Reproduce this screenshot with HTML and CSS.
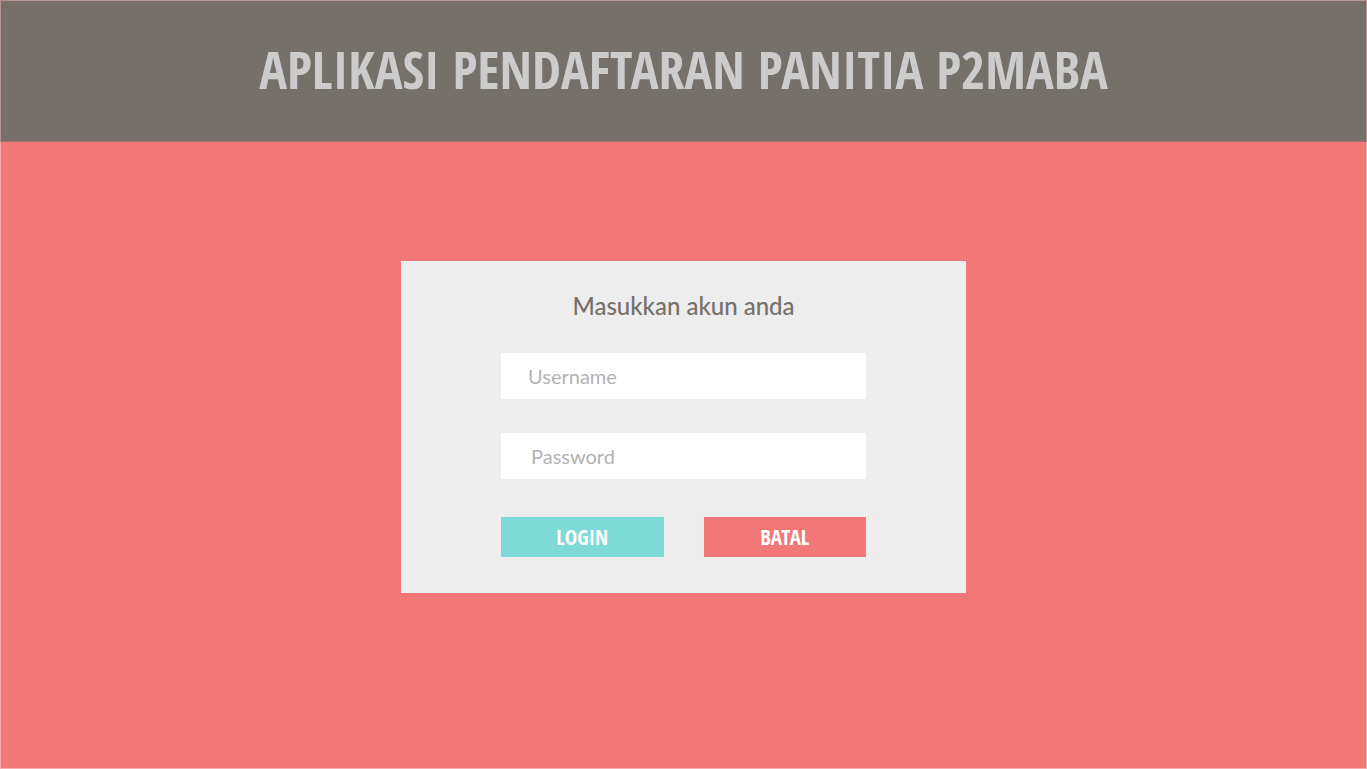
FILE: index.html
```html
<!DOCTYPE html>
<html lang="id">
<head>
<meta charset="utf-8">
<meta name="viewport" content="width=device-width, initial-scale=1">
<title>Aplikasi Pendaftaran Panitia P2MABA</title>
<link rel="stylesheet" href="styles.css">
</head>
<body>
<header class="banner">
  <h1 class="banner-title">APLIKASI PENDAFTARAN PANITIA P2MABA</h1>
</header>
<main class="content">
  <form class="card">
    <h2 class="card-title">Masukkan akun anda</h2>
    <input class="field" type="text" placeholder="Username" aria-label="Username">
    <input class="field field-password" type="password" placeholder="Password" aria-label="Password">
    <div class="actions">
      <button class="button button-login" type="submit">LOGIN</button>
      <button class="button button-cancel" type="reset">BATAL</button>
    </div>
  </form>
</main>
</body>
</html>
```

FILE: styles.css
```css
* {
  box-sizing: border-box;
}

body {
  margin: 0;
  min-height: 100vh;
  display: flex;
  flex-direction: column;
  background: #f27779;
  font-family: Lato, sans-serif;
}

.banner {
  padding: 28px 24px 32px;
  border: 1px solid #ba9390;
  border-bottom-color: #a27270;
  background: #76706b;
  text-align: center;
}

.banner-title {
  margin: 0;
  font-family: "Open Sans Condensed", "Roboto Condensed", "DejaVu Sans Condensed", sans-serif;
  font-size: 52px;
  font-weight: 700;
  line-height: 80px;
  color: #cccccc;
}

.content {
  flex: 1;
  display: flex;
  justify-content: center;
  align-items: flex-start;
  padding: 119px 24px 24px;
  border: 1px solid #f8acad;
  border-top: 0;
}

.card {
  width: 100%;
  max-width: 565px;
  padding: 30px 100px 36px;
  background: #ededed;
}

.card-title {
  margin: 0 0 32px;
  font-size: 24px;
  font-weight: 500;
  line-height: 30px;
  text-align: center;
  color: #76706b;
}

.field {
  display: block;
  width: 100%;
  height: 46px;
  margin: 0 0 34px;
  padding: 0 27px;
  border: 0;
  border-radius: 0;
  background: #ffffff;
  font-family: inherit;
  font-size: 20px;
  color: #76706b;
}

.field-password {
  margin-bottom: 38px;
  padding: 0 30px;
}

.field::placeholder {
  color: #b3b3b3;
  opacity: 1;
}

.actions {
  display: grid;
  grid-template-columns: 1fr 1fr;
  gap: 40px;
}

.button {
  height: 40px;
  padding: 0;
  border: 0;
  font-family: "Open Sans Condensed", "Roboto Condensed", "DejaVu Sans Condensed", sans-serif;
  font-size: 21px;
  font-weight: 700;
  color: #ffffff;
}

.button-login {
  background: #7edad6;
}

.button-cancel {
  background: #f27779;
}
```
